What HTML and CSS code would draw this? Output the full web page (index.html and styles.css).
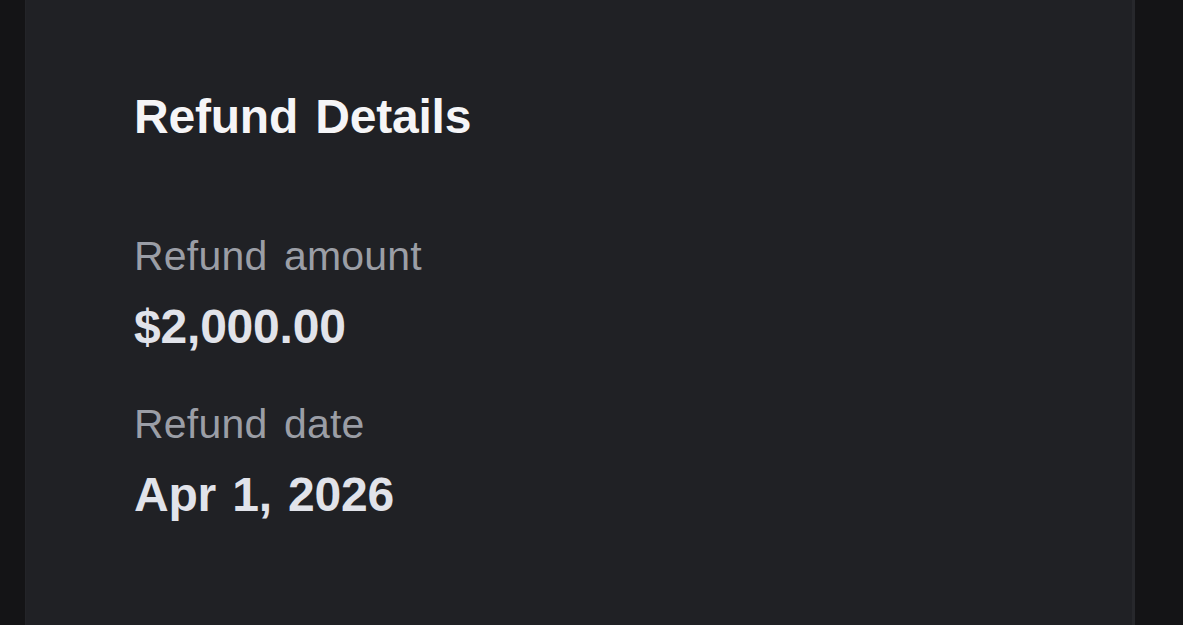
FILE: index.html
```html
<!DOCTYPE html>
<html lang="en">
<head>
<meta charset="utf-8">
<title>Refund Details</title>
<link rel="stylesheet" href="styles.css">
</head>
<body>
<div class="page">
  <section class="card">
    <h2 class="card-title">Refund Details</h2>
    <dl class="details">
      <div class="detail">
        <dt class="detail-label">Refund amount</dt>
        <dd class="detail-value">$2,000.00</dd>
      </div>
      <div class="detail">
        <dt class="detail-label">Refund date</dt>
        <dd class="detail-value">Apr 1, 2026</dd>
      </div>
    </dl>
  </section>
</div>
</body>
</html>
```

FILE: styles.css
```css
html, body {
  margin: 0;
  padding: 0;
  height: 100%;
  background: #141416;
  font-family: "Liberation Sans", Arial, sans-serif;
  overflow: hidden;
}

.page {
  display: flex;
  height: 100%;
  padding: 0 48px 0 25px;
  box-sizing: border-box;
}

.card {
  flex: 1;
  background: #202125;
  border-left: 1px solid #232428;
  border-right: 3px solid #27282c;
  padding: 89px 0 0 108px;
  box-sizing: border-box;
}

.card-title {
  margin: 0 0 87px;
  font-size: 48px;
  line-height: 56px;
  font-weight: 700;
  letter-spacing: -0.2px;
  word-spacing: 4px;
  color: #f5f5f7;
}

.details {
  margin: 0;
  display: flex;
  flex-direction: column;
  gap: 45px;
}

.detail {
  display: flex;
  flex-direction: column;
  gap: 19px;
}

.detail-label {
  font-size: 41px;
  line-height: 48px;
  letter-spacing: 0.2px;
  word-spacing: 5px;
  color: #9b9ea6;
}

.detail-value {
  margin: 0;
  font-size: 48px;
  line-height: 56px;
  font-weight: 700;
  letter-spacing: -0.2px;
  word-spacing: 3px;
  color: #e1e3ea;
}
```
